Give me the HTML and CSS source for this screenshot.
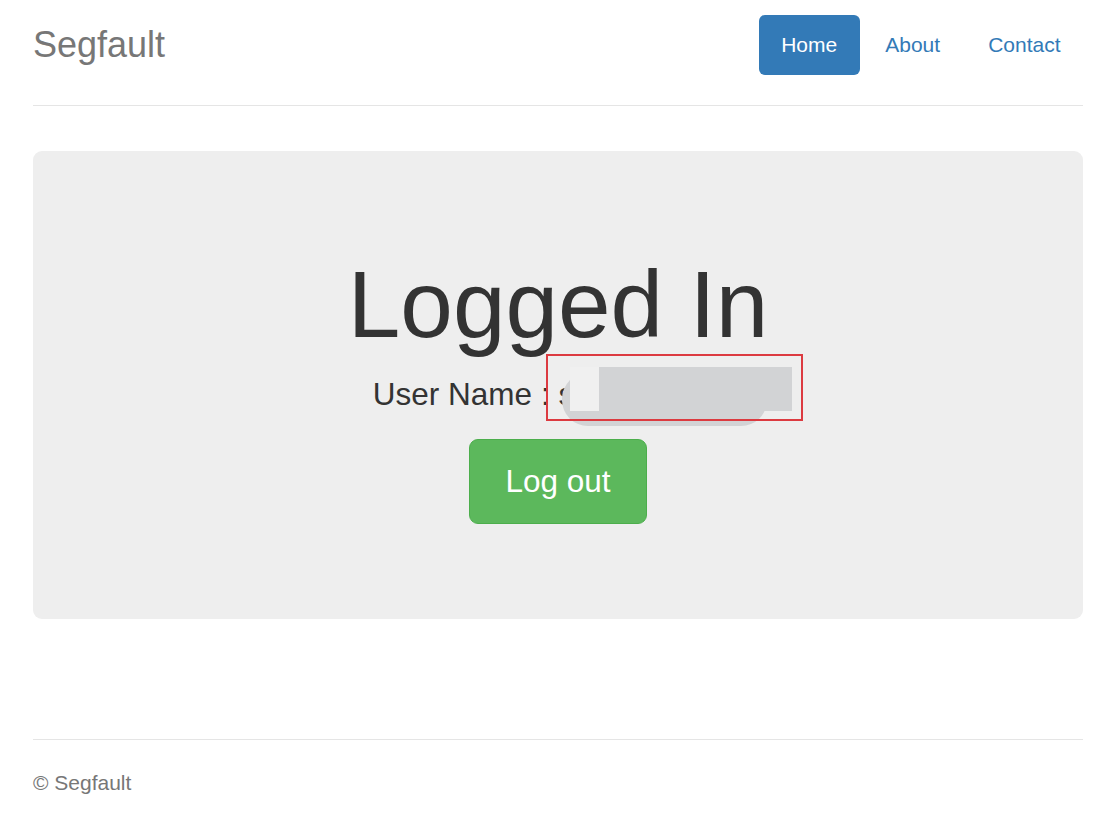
FILE: index.html
```html
<!DOCTYPE html>
<html lang="en">
<head>
<meta charset="utf-8">
<title>Segfault</title>
<link rel="stylesheet" href="styles.css">
</head>
<body>
<div class="container">
  <header class="header">
    <h3 class="brand">Segfault</h3>
    <nav>
      <ul class="nav-pills">
        <li><a class="pill active" href="#">Home</a></li>
        <li><a class="pill" href="#">About</a></li>
        <li><a class="pill" href="#">Contact</a></li>
      </ul>
    </nav>
  </header>

  <main class="jumbotron">
    <h1 class="title">Logged In</h1>
    <p class="user">User Name : s<span class="mask"><span class="mask-pill"></span><span class="mask-light"></span><span class="mask-gray"></span><span class="mask-frame"></span></span></p>
    <div class="actions">
      <button class="btn-logout" type="button">Log out</button>
    </div>
  </main>

  <footer class="footer">
    <p class="copy">© Segfault</p>
  </footer>
</div>
</body>
</html>
```

FILE: styles.css
```css
html, body {
  margin: 0;
  padding: 0;
  background: #fff;
}

body {
  font-family: "Liberation Sans", Arial, Helvetica, sans-serif;
  font-size: 21px;
  line-height: 1.42857;
  color: #333;
}

.container {
  padding: 15px 28px 20px 33px;
}

.header {
  display: flex;
  justify-content: space-between;
  align-items: flex-start;
  padding-bottom: 30px;
  border-bottom: 1px solid #e5e5e5;
  margin-bottom: 45px;
}

.brand {
  margin: 0;
  font-size: 36px;
  line-height: 60px;
  font-weight: normal;
  color: #777;
}

.nav-pills {
  display: flex;
  gap: 3px;
  list-style: none;
  margin: 0;
  padding: 0;
}

.pill {
  display: block;
  padding: 15px 22.5px;
  line-height: 30px;
  font-size: 21px;
  color: #337ab7;
  text-decoration: none;
  border-radius: 6px;
}

.pill.active {
  background: #337ab7;
  color: #fff;
}

.jumbotron {
  background: #eee;
  border-radius: 9px;
  padding: 72px 90px 72px;
  text-align: center;
}

.title {
  margin: 30px 0 15px;
  font-size: 94.5px;
  line-height: 1.1;
  font-weight: normal;
  color: #333;
}

.user {
  margin: 0 0 22.5px;
  font-size: 31.5px;
  line-height: 45px;
}

.mask {
  position: relative;
  display: inline-block;
  width: 169px;
  height: 30px;
}

.mask-pill {
  position: absolute;
  left: -12.5px;
  top: -1.5px;
  width: 205px;
  height: 53px;
  border-radius: 26px;
  background: #d2d3d5;
}

.mask-light {
  position: absolute;
  left: -4px;
  top: -7.5px;
  width: 28.5px;
  height: 43.5px;
  background: #f0f0f0;
}

.mask-gray {
  position: absolute;
  left: 24.5px;
  top: -7.5px;
  width: 193px;
  height: 43.5px;
  background: #d2d3d5;
}

.mask-frame {
  position: absolute;
  left: -28.5px;
  top: -20.5px;
  width: 257px;
  height: 67px;
  box-sizing: border-box;
  border: 2px solid #dc3a40;
}

.actions {
  display: flex;
  justify-content: center;
  margin-bottom: 22.5px;
}

.btn-logout {
  font-family: inherit;
  font-size: 31.5px;
  line-height: 41px;
  padding: 21px 35.75px;
  color: #fff;
  background: #5cb85c;
  border: 1px solid #4cae4c;
  border-radius: 9px;
  cursor: pointer;
}

.footer {
  margin-top: 120px;
  border-top: 1px solid #e5e5e5;
  padding-top: 28.5px;
  color: #777;
}

.copy {
  margin: 0;
  font-size: 21px;
  line-height: 30px;
}
```
